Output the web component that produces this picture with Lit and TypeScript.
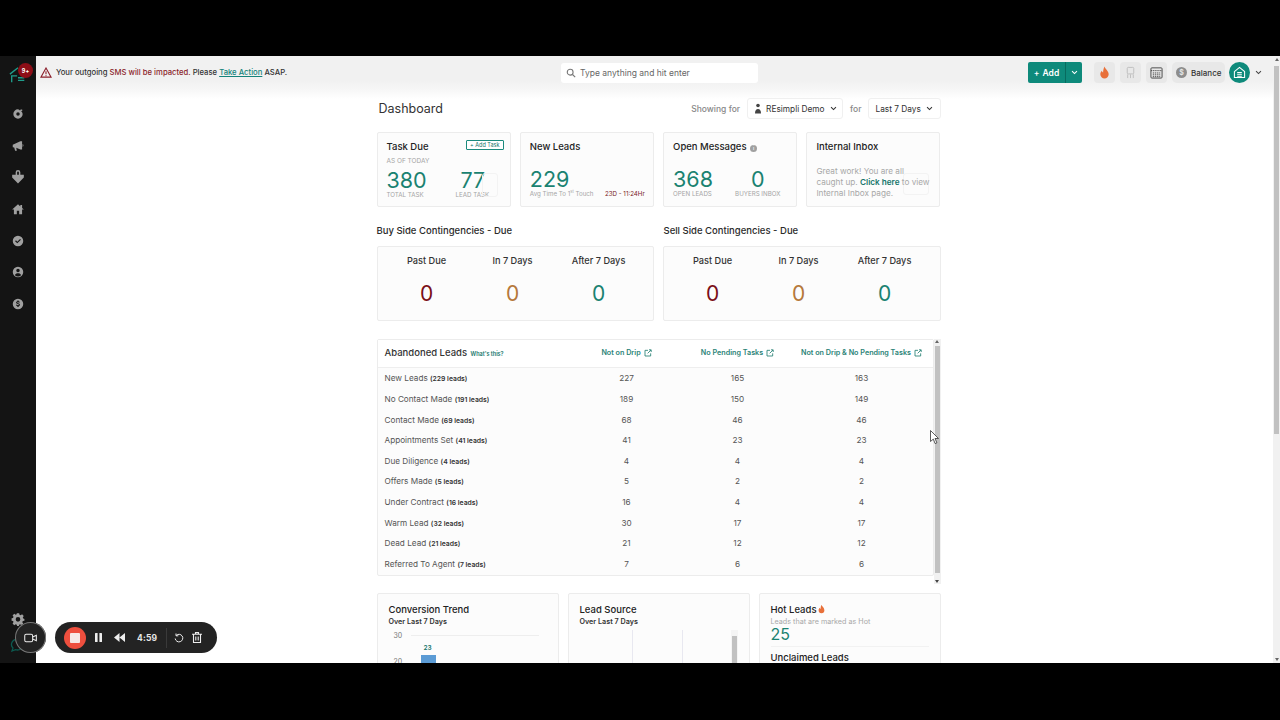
import { LitElement, html, css, svg } from "lit";
import { customElement } from "lit/decorators.js";

const ext = html`<svg class="ext" viewBox="0 0 12 12" fill="none" stroke="currentColor" stroke-width="1.300"><path d="M6 2H1.500v8.500h8.500V6.500"/><path d="M5.500 6.500L10.500 1.500M7.500 1.200h3.300v3.300"/></svg>`;

const side = [
  svg`<path d="M12 4a8 8 0 1 0 8 8l-1-3-1.500-1.500L20 5l-3-1-1.500 2.200A8 8 0 0 0 12 4zm0 5a3 3 0 1 1 0 6 3 3 0 0 1 0-6z" fill-rule="evenodd"/>`,
  svg`<path d="M3 10l13-6 3 0v14h-3L9 15l1 5H7l-1.500-5.500L3 14zM20 8.500a3 3 0 0 1 0 5z"/>`,
  svg`<path d="M8 4a4 4 0 0 1 8 0v4h6v5l-10 10L2 13V8h6zm2.500 0v4h3V4a1.500 1.500 0 0 0-3 0z" fill-rule="evenodd"/>`,
  svg`<path d="M12 4L2 13h3v8h5v-6h4v6h5v-8h3l-3-2.700V5h-3v2.600z"/>`,
  svg`<path d="M12 3a9 9 0 1 0 0 18 9 9 0 0 0 0-18zm-1.200 13L7 12.300l1.500-1.500 2.300 2.300 4.700-4.700L17 9.900z" fill-rule="evenodd"/>`,
  svg`<path d="M12 3a9 9 0 1 0 0 18 9 9 0 0 0 0-18zm0 3.500a3 3 0 1 1 0 6 3 3 0 0 1 0-6zM6.800 17.500c.6-2.500 2.700-3.500 5.200-3.500s4.600 1 5.200 3.500a7 7 0 0 1-10.400 0z" fill-rule="evenodd"/>`,
  svg`<path d="M12 3a9 9 0 1 0 0 18 9 9 0 0 0 0-18zm1 3v1.300c1 .2 1.900.8 2.200 1.900l-1.700.5c-.2-.5-.7-.8-1.500-.8-.9 0-1.400.3-1.400.8s.5.700 1.700 1c1.700.4 3 1 3 2.600 0 1.300-1 2.100-2.300 2.400V17h-2v-1.300c-1.200-.2-2.200-1-2.500-2.200l1.700-.5c.2.700.9 1.100 1.800 1.100 1 0 1.500-.4 1.500-.9s-.5-.8-1.800-1.100c-1.600-.4-2.900-1-2.900-2.500 0-1.200.9-2 2.200-2.300V6z" fill-rule="evenodd"/>`,
];

const gear = svg`<path d="M10 2h4l.6 2.800 1.900.8L19 4l2.800 2.800-1.600 2.500.8 1.900L23 12v3l-2.800.6-.8 1.900 1.600 2.500L18 22.800l-2.500-1.600-1.500.7L13.500 24h-3l-.6-2.300-1.900-.8L5.500 22.500 2.700 19.700l1.600-2.500-.8-1.900L1 14.800v-4l2.500-.6.8-1.900L2.700 5.800 5.500 3l2.500 1.600 1.600-.7zM12 8.500a4 4 0 1 0 0 8 4 4 0 0 0 0-8z" fill-rule="evenodd"/>`;

const rows: [string, string, number, number, number][] = [
  ["New Leads", "229 leads", 227, 165, 163],
  ["No Contact Made", "191 leads", 189, 150, 149],
  ["Contact Made", "69 leads", 68, 46, 46],
  ["Appointments Set", "41 leads", 41, 23, 23],
  ["Due Diligence", "4 leads", 4, 4, 4],
  ["Offers Made", "5 leads", 5, 2, 2],
  ["Under Contract", "16 leads", 16, 4, 4],
  ["Warm Lead", "32 leads", 30, 17, 17],
  ["Dead Lead", "21 leads", 21, 12, 12],
  ["Referred To Agent", "7 leads", 7, 6, 6],
];

const caret = html`<svg class="caret" viewBox="0 0 10 6" fill="none" stroke="currentColor" stroke-width="1.500"><path d="M1.500 1l3.500 3.500L8.500 1"/></svg>`;
const flame = svg`<path d="M7 .5c.5 2.500 4.500 4.500 4.500 8.500A4.500 4.500 0 0 1 7 13.500 4.500 4.500 0 0 1 2.500 9c0-1.800.8-3 1.700-4 .2 1 .7 1.600 1.300 2C5.500 5 6 2.500 7 .5z" fill="#e8703a"/>`;

@customElement("app-root")
export class AppRoot extends LitElement {
  static styles = css`
    :host { display: block; height: 720px; background: #000; font-family: Inter, "Liberation Sans", sans-serif; color: #2b2b2b; overflow: hidden; position: relative; }
    .frame { position: absolute; left: 0; right: 0; top: 56px; height: 607px; display: flex; background: #fff; overflow: hidden; }
    .side { width: 36px; flex: none; background: #141414; display: flex; flex-direction: column; align-items: center; color: #9b9b9b; }
    .logo { position: relative; width: 36px; height: 37px; margin-top: 4px; }
    .logo svg { position: absolute; left: 9px; top: 6px; width: 18px; height: 18px; }
    .badge { position: absolute; left: 18px; top: 3px; width: 15px; height: 15px; border-radius: 50%; background: #8d0e17; color: #fff; font-size: 5.500px; font-weight: 700; display: flex; align-items: center; justify-content: center; }
    .side-ic { width: 14px; height: 14px; fill: #a0a0a0; display: block; }
    .side-list { display: flex; flex-direction: column; gap: 17.700px; margin-top: 10px; }
    .side-bottom { margin-top: auto; display: flex; flex-direction: column; align-items: center; gap: 12px; margin-bottom: 11px; }
    .chat { width: 16px; height: 14px; }
    .main { flex: 1; min-width: 0; display: flex; flex-direction: column; position: relative; }
    .top { height: 33px; flex: none; background: linear-gradient(#f1f1f1, #f1f1f1 75%, #f6f6f6); display: flex; align-items: center; padding-left: 4px; }
    .warn { width: 12px; height: 11px; margin-right: 4px; flex: none; }
    .alert { font-size: 7.700px; font-weight: 500; color: #333; white-space: nowrap; width: 505px; flex: none; }
    .alert b { color: #8b1f2b; font-weight: 500; }
    .alert a { color: #14837a; text-decoration: underline; }
    .search { width: 197px; height: 20px; background: #fff; border-radius: 3px; display: flex; align-items: center; gap: 4px; padding-left: 5px; box-sizing: border-box; font-size: 8.500px; color: #666; flex: none; }
    .search svg { width: 10px; height: 10px; }
    .tools { margin-left: auto; display: flex; align-items: center; margin-right: 18px; }
    .add { height: 21px; width: 54px; border-radius: 2px; background: #0e8a7b; color: #fff; display: flex; align-items: center; font-size: 8.500px; font-weight: 600; }
    .add .l { flex: 1; display: flex; align-items: center; justify-content: center; gap: 3px; border-right: 1px solid #086b5f; height: 100%; }
    .add .r { width: 16px; display: flex; align-items: center; justify-content: center; }
    .add .caret { width: 7px; height: 5px; }
    .tb { width: 21px; height: 21px; border-radius: 4px; background: #e8e8e8; margin-left: 5px; display: flex; align-items: center; justify-content: center; }
    .tb.first { margin-left: 12px; }
    .tb svg { width: 13px; height: 13px; }
    .bal { height: 21px; width: 53px; border-radius: 5px; background: #e8e8e8; margin-left: 5px; display: flex; align-items: center; gap: 4px; padding-left: 4px; box-sizing: border-box; font-size: 8px; font-weight: 500; color: #333; }
    .bal i { width: 11px; height: 11px; border-radius: 50%; background: #8d8d8d; color: #e6e6e6; font-style: normal; font-size: 7px; display: flex; align-items: center; justify-content: center; font-weight: 700; }
    .avatar { width: 21px; height: 21px; border-radius: 50%; background: #0e8a7b; margin-left: 4px; display: flex; align-items: center; justify-content: center; }
    .avatar svg { width: 13px; height: 13px; }
    .tools > .caret { width: 7px; height: 5px; margin-left: 5px; color: #444; }
    .scroll { position: absolute; right: 0; top: 0; bottom: 0; width: 7px; background: #f1f1f1; display: flex; flex-direction: column; align-items: center; }
    .scroll .thumb { width: 5px; height: 368px; margin-top: 5px; background: #c1c1c1; }
    .scroll .arr { width: 0; height: 0; border-left: 2.500px solid transparent; border-right: 2.500px solid transparent; border-bottom: 3px solid #666; margin-top: 2px; }
    .scroll .arr.d { border-bottom: 0; border-top: 3px solid #666; margin-top: auto; margin-bottom: 2px; }
    .content { flex: 1; overflow: hidden; padding: 0 7px 0 8px; display: flex; justify-content: center; background: linear-gradient(#f6f6f6, #fff 10px); }
    .col { width: 564px; flex: none; }
    .head { height: 39px; display: flex; align-items: center; margin-bottom: 4px; }
    .head h1 { font-size: 12.500px; font-weight: 400; margin: 0 0 0 2px; color: #333; flex: 1; }
    .show { font-size: 8.500px; color: #888; font-weight: 500; margin-right: 7px; white-space: nowrap; }
    .sel { height: 21px; border: 1px solid #f0f0f0; border-radius: 3px; box-sizing: border-box; display: flex; align-items: center; font-size: 8.300px; color: #333; padding: 0 7px; gap: 5px; white-space: nowrap; background: #fff; }
    .sel .caret { width: 7px; height: 5px; flex: none; }
    .sel svg.person { width: 10px; height: 11px; flex: none; margin-right: -2px; }
    .sel.one { width: 96px; margin-right: 7px; padding: 0 5px; }
    .sel.two { width: 73px; margin-left: -1px; justify-content: space-between; }
    .row4 { display: grid; grid-template-columns: 134px 134px 134px 134px; column-gap: 9.300px; }
    .card { background: #fcfcfc; border: 1px solid #ececec; border-radius: 2px; box-sizing: border-box; position: relative; }
    .mini { height: 75px; padding: 8px 9px 0; }
    .title { font-size: 9.500px; font-weight: 500; color: #222; white-space: nowrap; }
    .addt { position: absolute; right: 6px; top: 7px; border: 1px solid #1b8a7d; border-radius: 1px; font-size: 5.500px; color: #14756a; padding: 1px 3px; background: #fff; white-space: nowrap; }
    .asof { font-size: 6.500px; color: #a5a5a5; margin-top: 5px; }
    .stats { display: flex; margin-top: 4.500px; position: relative; }
    .stats.tall { margin-top: 16.500px; }
    .num { font-size: 21.500px; line-height: 21px; color: #1a8271; font-weight: 400; }
    .num.n229 { margin-top: 16.500px; }
    .num.n77 { padding-left: 5px; }
    .cap { font-size: 6.200px; color: #a5a5a5; white-space: nowrap; line-height: 8px; }
    .ghost { position: absolute; width: 14px; height: 22px; border: 1px solid #f3f3f3; border-radius: 3px; pointer-events: none; }
    .g1 { right: 12px; top: 40px; }
    .g2 { right: 10px; top: 40px; width: 24px; height: 20px; }
    .avg { display: flex; justify-content: space-between; align-items: baseline; width: 115px; }
    .avg span:last-child { color: #7a1b25; }
    .avg sup { font-size: 4px; line-height: 0; }
    .info { display: inline-block; width: 7px; height: 7px; border-radius: 50%; background: #a0a0a0; color: #fff; font-size: 5px; text-align: center; line-height: 7px; margin-left: 1px; }
    .inbox { font-size: 8.200px; line-height: 11px; color: #a8a8a8; margin-top: 14px; white-space: nowrap; position: relative; }
    .inbox b { color: #14756a; font-weight: 600; }
    .heads { display: grid; grid-template-columns: 278px 278px; column-gap: 9px; margin-top: 13px; height: 21px; align-items: center; font-size: 9.500px; font-weight: 500; color: #2b2b2b; }
    .row2 { display: grid; grid-template-columns: 277px 278px; column-gap: 9px; margin-top: 5px; }
    .cont { height: 75px; display: grid; grid-template-columns: 86px 86px 86px; text-align: center; padding: 8px 0 0 6px; box-sizing: border-box; }
    .cont .lbl { font-size: 9.200px; font-weight: 500; color: #333; line-height: 12px; }
    .cont .big { font-size: 21px; line-height: 26px; margin-top: 14px; }
    .red { color: #7a0f17; } .org { color: #b5783a; } .grn { color: #1a8271; }
    .tablewrap { display: flex; margin-top: 18px; }
    .tbl { width: 557px; flex: none; height: 237px; box-sizing: border-box; }
    .thead, .tr { display: grid; grid-template-columns: 194px 96px 126px 122px; padding-left: 7px; align-items: center; }
    .thead { height: 28px; border-bottom: 1px solid #eeeeee; background: #fff; box-sizing: border-box; padding-bottom: 2px; }
    .thead .t { font-size: 9.500px; font-weight: 500; color: #333; white-space: nowrap; }
    .thead .t small { font-size: 5.500px; color: #14756a; margin-left: 1px; font-weight: 600; }
    .thead .h { font-size: 7.200px; font-weight: 600; color: #2b8377; white-space: nowrap; display: flex; align-items: center; justify-content: center; gap: 3px; }
    .ext { width: 8px; height: 8px; flex: none; }
    .tr { height: 20.620px; font-size: 8.200px; color: #555; }
    .tr b { font-size: 6.800px; font-weight: 600; color: #333; }
    .tr div { text-align: center; }
    .tr div:first-child { text-align: left; white-space: nowrap; }
    .tsb { width: 7px; height: 245px; background: #f1f1f1; display: flex; flex-direction: column; align-items: center; }
    .tsb .thumb { width: 5px; height: 227px; margin-top: 3px; background: #c1c1c1; }
    .tsb .arr { width: 0; height: 0; border-left: 2.500px solid transparent; border-right: 2.500px solid transparent; border-bottom: 3px solid #666; margin-top: 1px; }
    .tsb .arr.d { border-bottom: 0; border-top: 3px solid #444; margin-top: auto; margin-bottom: 1px; }
    .bottom { display: grid; grid-template-columns: 182px 182px 182px; column-gap: 9px; margin-top: 9px; }
    .b { height: 120px; padding: 10px 11px 0; overflow: hidden; }
    .b .sub { font-size: 7.200px; font-weight: 600; color: #333; margin-top: 2px; }
    .chart { margin-top: 4px; font-size: 7px; color: #777; position: relative; height: 60px; }
    .chart .line { position: absolute; left: 22px; right: 8px; top: 5px; height: 1px; background: #eee; }
    .chart .v30 { position: absolute; left: 5px; top: 1px; }
    .bar { position: absolute; left: 32px; top: 25px; width: 15px; height: 40px; background: #5b9bd5; }
    .barv { position: absolute; left: 35px; top: 14px; font-size: 6.500px; font-weight: 600; color: #14756a; }
    .two20 { position: absolute; left: 5px; top: 27px; }
    .vl { position: absolute; top: 0; width: 1px; height: 60px; background: #e8e8f0; }
    .inner-sb { position: absolute; right: 11px; top: 36px; width: 7px; height: 84px; background: #f4f4f4; }
    .inner-sb i { display: block; width: 5px; height: 70px; margin: 6px auto 0; background: #c1c1c1; }
    .hot { font-size: 7.200px; color: #a8a8a8; margin-top: 2px; }
    .hotn { font-size: 16px; line-height: 17px; color: #1a8271; }
    .hr { height: 1px; background: #f2f2f2; margin: 3px 0 5px; }
    .flame { width: 9px; height: 10px; vertical-align: -1px; }
    .rec { position: absolute; left: 55px; top: 622px; width: 162px; height: 31px; border-radius: 16px; background: #232323; display: flex; align-items: center; color: #ececec; padding-left: 9px; box-sizing: border-box; }
    .cam { position: absolute; left: 15px; top: 622px; width: 31px; height: 31px; border-radius: 50%; background: #232323; display: flex; align-items: center; justify-content: center; box-shadow: inset 0 0 0 1px #777; }
    .cam svg { width: 13px; height: 10px; }
    .stop { width: 22px; height: 22px; border-radius: 50%; background: #ee4f3e; display: flex; align-items: center; justify-content: center; flex: none; }
    .stop i { width: 10px; height: 10px; background: #f7e9e6; border-radius: 1px; display: block; }
    .rec svg { flex: none; }
    .i-pause { margin-left: 8px; } .i-back { margin-left: 11px; } .i-redo { margin-left: 7px; } .i-trash { margin-left: 8px; }
    .time { font-size: 8.500px; font-weight: 700; margin-left: 12px; color: #e8e8e8; letter-spacing: .2px; }
    .div { width: 1px; height: 20px; background: #3a3a3a; margin-left: 9px; }
    .cursor { position: absolute; left: 930px; top: 430px; width: 9px; height: 15px; }
  `;

  render() {
    return html`
      <div class="frame">
        <aside class="side">
          <div class="logo">
            <svg viewBox="0 0 20 20" fill="none" stroke="#1f9d8b" stroke-width="1.500"><path d="M1 9L10 2"/><path d="M3 18V11h6"/><path d="M10 13h7M10 16h7"/></svg>
            <span class="badge">9+</span>
          </div>
          <div class="side-list">
            ${side.map((p) => html`<svg class="side-ic" viewBox="0 0 24 24">${p}</svg>`)}
          </div>
          <div class="side-bottom">
            <svg class="side-ic" viewBox="0 0 24 24">${gear}</svg>
            <svg class="chat" viewBox="0 0 16 14" fill="none" stroke="#0c5a50" stroke-width="1.300"><path d="M8 1a6.500 5.500 0 0 0-5 9L2 13l3.500-1.300A6.500 5.500 0 1 0 8 1z"/></svg>
          </div>
        </aside>
        <div class="main">
          <div class="top">
            <svg class="warn" viewBox="0 0 14 13" fill="none" stroke="#8b1f2b" stroke-width="1.300"><path d="M7 1.200L13 12H1z"/><path d="M7 5v3.500M7 9.800v1"/></svg>
            <span class="alert">Your outgoing <b>SMS will be impacted.</b> Please <a>Take Action</a> ASAP.</span>
            <div class="search">
              <svg viewBox="0 0 12 12" fill="none" stroke="#777" stroke-width="1.300"><circle cx="5" cy="5" r="3.500"/><path d="M7.800 7.800L11 11"/></svg>
              Type anything and hit enter
            </div>
            <div class="tools">
              <div class="add"><span class="l"><span>+</span>Add</span><span class="r">${caret}</span></div>
              <div class="tb first"><svg viewBox="0 0 14 14">${flame}</svg></div>
              <div class="tb"><svg viewBox="0 0 14 14" fill="none" stroke="#bdbdbd" stroke-width="1"><rect x="3.500" y="1.500" width="7" height="7" rx="1"/><path d="M4 9v4M7 9v4M10 9v4"/></svg></div>
              <div class="tb"><svg viewBox="0 0 14 14" fill="none" stroke="#444" stroke-width="1"><rect x="1" y="2" width="12" height="11" rx="1"/><path d="M1 5h12M3 7.500h8M3 9.500h8M3 11.500h8" stroke-dasharray="1.500 .8"/></svg></div>
              <div class="bal"><i>$</i>Balance</div>
              <div class="avatar"><svg viewBox="0 0 14 14" fill="none" stroke="#fff" stroke-width="1.100"><path d="M1.500 6L7 1.500 12.500 6v6.500h-11z"/><path d="M4.500 7h5M4.500 9h5M4.500 11h5"/></svg></div>
              ${caret}
            </div>
          </div>
          <div class="content">
            <div class="col">
              <div class="head">
                <h1>Dashboard</h1>
                <span class="show">Showing for</span>
                <div class="sel one"><svg class="person" viewBox="0 0 10 11" fill="#444"><circle cx="5" cy="2.500" r="1.800"/><path d="M2 10.500c0-3 1-4.500 3-4.500s3 1.500 3 4.500z"/></svg>REsimpli Demo ${caret}</div>
                <span class="show">for</span>
                <div class="sel two">Last 7 Days ${caret}</div>
              </div>
              <div class="row4">
                <div class="card mini">
                  <div class="title">Task Due</div>
                  <span class="addt">+ Add Task</span>
                  <div class="asof">AS OF TODAY</div>
                  <div class="stats">
                    <div style="width:69px"><div class="num">380</div><div class="cap">TOTAL TASK</div></div>
                    <div><div class="num n77">77</div><div class="cap">LEAD TASK</div></div>
                  </div>
                  <span class="ghost g1"></span>
                </div>
                <div class="card mini">
                  <div class="title">New Leads</div>
                  <div class="num n229">229</div>
                  <div class="cap avg"><span>Avg Time To 1<sup>st</sup> Touch</span><span>23D - 11:24Hr</span></div>
                </div>
                <div class="card mini">
                  <div class="title">Open Messages <span class="info">i</span></div>
                  <div class="stats tall">
                    <div style="width:62px"><div class="num">368</div><div class="cap">OPEN LEADS</div></div>
                    <div style="text-align:center"><div class="num">0</div><div class="cap">BUYERS INBOX</div></div>
                  </div>
                </div>
                <div class="card mini">
                  <div class="title">Internal Inbox</div>
                  <span class="ghost g2"></span>
                  <div class="inbox">Great work! You are all<br>caught up. <b>Click here</b> to view<br>Internal Inbox page.</div>
                </div>
              </div>
              <div class="heads"><span>Buy Side Contingencies - Due</span><span>Sell Side Contingencies - Due</span></div>
              <div class="row2">
                ${[0, 1].map(() => html`
                  <div class="card cont">
                    <div><div class="lbl">Past Due</div><div class="big red">0</div></div>
                    <div><div class="lbl">In 7 Days</div><div class="big org">0</div></div>
                    <div><div class="lbl">After 7 Days</div><div class="big grn">0</div></div>
                  </div>`)}
              </div>
              <div class="tablewrap">
                <div class="card tbl">
                  <div class="thead">
                    <div class="t">Abandoned Leads <small>What's this?</small></div>
                    <div class="h">Not on Drip ${ext}</div>
                    <div class="h">No Pending Tasks ${ext}</div>
                    <div class="h">Not on Drip &amp; No Pending Tasks ${ext}</div>
                  </div>
                  ${rows.map((r) => html`
                    <div class="tr"><div>${r[0]} <b>(${r[1]})</b></div><div>${r[2]}</div><div>${r[3]}</div><div>${r[4]}</div></div>`)}
                </div>
                <div class="tsb"><span class="arr"></span><div class="thumb"></div><span class="arr d"></span></div>
              </div>
              <div class="bottom">
                <div class="card b">
                  <div class="title">Conversion Trend</div>
                  <div class="sub">Over Last 7 Days</div>
                  <div class="chart"><span class="v30">30</span><span class="line"></span><span class="barv">23</span><span class="bar"></span><span class="two20">20</span></div>
                </div>
                <div class="card b">
                  <div class="title">Lead Source</div>
                  <div class="sub">Over Last 7 Days</div>
                  <div class="chart"><span class="vl" style="left:52px"></span><span class="vl" style="left:102px"></span></div>
                  <span class="inner-sb"><i></i></span>
                </div>
                <div class="card b">
                  <div class="title">Hot Leads<svg class="flame" viewBox="0 0 14 14">${flame}</svg></div>
                  <div class="hot">Leads that are marked as Hot</div>
                  <div class="hotn">25</div>
                  <div class="hr"></div>
                  <div class="title">Unclaimed Leads</div>
                </div>
              </div>
            </div>
          </div>
          <div class="scroll"><span class="arr"></span><div class="thumb"></div><span class="arr d"></span></div>
        </div>
      </div>
      <div class="cam"><svg viewBox="0 0 14 10" fill="none" stroke="#eee" stroke-width="1.100"><rect x=".8" y="1" width="8.500" height="8" rx="1.500"/><path d="M9.300 4l4-2v6l-4-2"/></svg></div>
      <div class="rec">
        <div class="stop"><i></i></div>
        <svg class="i-pause" width="9" height="9" viewBox="0 0 9 9" fill="#eee"><rect x="1" y="0" width="2.600" height="9" rx=".5"/><rect x="5.400" y="0" width="2.600" height="9" rx=".5"/></svg>
        <svg class="i-back" width="11" height="9" viewBox="0 0 11 9" fill="#eee"><path d="M5.500 0v9L0 4.500zM11 0v9L5.500 4.500z"/></svg>
        <span class="time">4:59</span>
        <span class="div"></span>
        <svg class="i-redo" width="10" height="10" viewBox="0 0 10 10" fill="none" stroke="#eee" stroke-width="1"><path d="M2.200 2.500A3.800 3.800 0 1 1 1.200 5.500"/><path d="M2 .5v2.300h2.300"/></svg>
        <svg class="i-trash" width="10" height="11" viewBox="0 0 10 11" fill="none" stroke="#eee" stroke-width="1.100"><path d="M0 2.200h10M3.500 2V.6h3V2M1.500 2.500v8h7v-8M3.800 4.500v4M6.200 4.500v4"/></svg>
      </div>
      <svg class="cursor" viewBox="0 0 9 15"><path d="M.5.500v11l2.800-2.400 1.800 4.500 1.800-.8-1.900-4.300H8.500z" fill="#fff" stroke="#333" stroke-width=".8"/></svg>
    `;
  }
}
